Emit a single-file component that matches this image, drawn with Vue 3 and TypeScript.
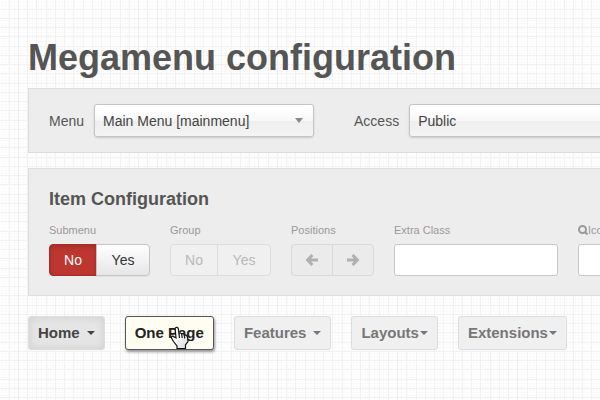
<script setup lang="ts">
import { ref } from 'vue'

interface MenuItem {
  label: string
  dropdown: boolean
  state: 'active' | 'hover' | 'idle'
  spaced: boolean
}

const items: MenuItem[] = [
  { label: 'Home', dropdown: true, state: 'active', spaced: true },
  { label: 'One Page', dropdown: false, state: 'hover', spaced: false },
  { label: 'Features', dropdown: true, state: 'idle', spaced: true },
  { label: 'Layouts', dropdown: true, state: 'idle', spaced: false },
  { label: 'Extensions', dropdown: true, state: 'idle', spaced: false },
]

const menu = ref('mainmenu')
const access = ref('public')
const submenu = ref(false)
const extraClass = ref('')
const icon = ref('')
</script>

<template>
  <main class="page">
    <h1>Megamenu configuration</h1>

    <section class="panel filters">
      <div class="filter">
        <label for="menu">Menu</label>
        <span class="select">
          <select id="menu" v-model="menu">
            <option value="mainmenu">Main Menu [mainmenu]</option>
          </select>
        </span>
      </div>
      <div class="filter">
        <label for="access">Access</label>
        <span class="select">
          <select id="access" v-model="access">
            <option value="public">Public</option>
          </select>
        </span>
      </div>
    </section>

    <section class="panel config">
      <h2>Item Configuration</h2>
      <div class="fields">
        <div class="field" role="group" aria-labelledby="submenu-label">
          <span id="submenu-label" class="caption">Submenu</span>
          <div class="buttons toggle">
            <button type="button" :class="{ danger: !submenu }" @click="submenu = false">No</button>
            <button type="button" :class="{ success: submenu }" @click="submenu = true">Yes</button>
          </div>
        </div>
        <div class="field" role="group" aria-labelledby="group-label">
          <span id="group-label" class="caption">Group</span>
          <div class="buttons toggle">
            <button type="button" disabled>No</button>
            <button type="button" disabled>Yes</button>
          </div>
        </div>
        <div class="field" role="group" aria-labelledby="positions-label">
          <span id="positions-label" class="caption">Positions</span>
          <div class="buttons arrows">
            <button type="button" disabled aria-label="Move left">
              <svg width="12" height="12" viewBox="0 0 12 12"><path d="M6.500 1 1.500 6l5 5M2 6h10" /></svg>
            </button>
            <button type="button" disabled aria-label="Move right">
              <svg width="12" height="12" viewBox="0 0 12 12"><path d="m5.500 1 5 5-5 5M10 6H0" /></svg>
            </button>
          </div>
        </div>
        <div class="field">
          <label for="extra" class="caption">Extra Class</label>
          <input id="extra" v-model="extraClass" type="text" />
        </div>
        <div class="field">
          <label for="icon" class="caption">
            <svg class="search" width="10" height="10" viewBox="0 0 10 10"><circle cx="4.500" cy="4.500" r="3.500" /><path d="m7 7 2.500 2.500" /></svg>Icon</label>
          <input id="icon" v-model="icon" type="text" />
        </div>
      </div>
    </section>

    <nav class="menu">
      <a v-for="item in items" :key="item.label" href="#" :class="['item', item.state]">
        {{ item.label }}<span v-if="item.dropdown" :class="['caret', { spaced: item.spaced }]"></span>
        <svg v-if="item.state === 'hover'" class="pointer" width="20" height="24" viewBox="0 0 20 24">
          <defs>
            <linearGradient id="hand" x1="0" y1="0" x2="1" y2="1">
              <stop offset="0.4" stop-color="#fff" />
              <stop offset="1" stop-color="#d4d4d4" />
            </linearGradient>
          </defs>
          <path fill="url(#hand)" d="M6 12 5.200 3Q5 1.500 6.500 1.300T8.300 2.700L9 7.500Q10.500 6.300 11.700 8 13.300 7 14.300 9 16.500 8.500 17.500 11L18 15.500 15.500 19V22.500H7V20L3.500 15.500 1.500 12Q1 10 3 10.200Z" />
          <path fill="none" d="M9 7.500 9.500 12M11.700 8 12.200 12M14.300 9 14.700 12.500" />
        </svg>
      </a>
    </nav>
  </main>
</template>

<style>
body {
  margin: 0;
}
</style>

<style scoped>
.page {
  --major: #f2f2f2;
  --minor: #fbfbfb;
  box-sizing: border-box;
  min-height: 100vh;
  padding: 38px 0 48px 28px;
  overflow: hidden;
  color: #555;
  font: 14px/20px "Liberation Sans", Arial, sans-serif;
  background:
    repeating-linear-gradient(90deg, transparent 0 9px, var(--major) 9px 10px, transparent 10px 18px, var(--major) 18px 19px, transparent 19px 27px, var(--major) 27px 28px, transparent 28px 36px, var(--major) 36px 37px),
    repeating-linear-gradient(transparent 0 9px, var(--major) 9px 10px, transparent 10px 18px, var(--major) 18px 19px, transparent 19px 27px, var(--major) 27px 28px, transparent 28px 36px, var(--major) 36px 37px),
    repeating-linear-gradient(90deg, transparent 0 2px, var(--minor) 2px 3px),
    repeating-linear-gradient(#fff 0 2px, var(--minor) 2px 3px);
}

h1 {
  margin: 0 0 10px;
  font-size: 36px;
  line-height: 40px;
  white-space: nowrap;
}

h2 {
  margin: 0 0 12px;
  font-size: 18px;
  line-height: 20px;
}

.panel {
  box-sizing: border-box;
  padding: 20px 0 19px 20px;
  overflow: hidden;
  border: 1px solid #ddd;
  border-right: 0;
  background: #ededed;
}

.filters {
  display: flex;
  gap: 40px;
  padding: 15px 0 15px 20px;
}

.filter {
  display: flex;
  flex: none;
  align-items: center;
  gap: 10px;
}

.select {
  position: relative;
  display: block;
}

.select::after {
  position: absolute;
  top: 14px;
  right: 11px;
  border: 4px solid transparent;
  border-top: 5px solid #888;
  border-bottom: 0;
  content: "";
  pointer-events: none;
}

select {
  box-sizing: border-box;
  display: block;
  width: 220px;
  height: 33px;
  padding: 0 8px;
  border: 1px solid #c4c4c4;
  border-radius: 3px;
  color: #444;
  font: inherit;
  background: linear-gradient(#fff 20%, #f6f6f6 50%, #eee 52%, #f4f4f4);
  box-shadow: 0 1px 2px rgba(0, 0, 0, 0.15);
  appearance: none;
}

.config {
  margin-top: 15px;
}

.fields {
  display: flex;
  gap: 20px;
}

.field {
  flex: none;
}

.caption {
  display: block;
  margin-bottom: 5px;
  color: #999;
  font-size: 11px;
  line-height: 18px;
}

.buttons {
  display: flex;
}

button {
  box-sizing: border-box;
  height: 32px;
  padding: 0;
  border: 1px solid #c4c4c4;
  border-radius: 0 4px 4px 0;
  color: #333;
  font: inherit;
  background: linear-gradient(#fff, #e6e6e6);
  box-shadow: 0 1px 1px rgba(0, 0, 0, 0.05);
}

button:first-child {
  border-radius: 4px 0 0 4px;
}

button + button {
  margin-left: -1px;
}

.toggle button {
  width: 48px;
}

.toggle button + button {
  width: 54px;
}

button.danger {
  border-color: #a92b27;
  color: #fff;
  background: #bd362f;
  box-shadow: inset 0 2px 4px rgba(0, 0, 0, 0.15);
}

button.success {
  color: #fff;
  background: #46a546;
}

button:disabled {
  border-color: #ddd;
  color: #b9b9b9;
  background: #f0f0f0;
  box-shadow: none;
}

.arrows button {
  width: 42px;
}

.arrows button:disabled {
  border-color: #d8d8d8;
  background: #ebebeb;
}

.arrows svg {
  display: block;
  margin: 0 auto;
  fill: none;
  stroke: #b0b0b0;
  stroke-width: 3;
}

input {
  box-sizing: border-box;
  display: block;
  width: 164px;
  height: 32px;
  padding: 4px 6px;
  border: 1px solid #c8c8c8;
  border-radius: 3px;
  font: inherit;
  background: #fff;
}

.search {
  fill: none;
  stroke: #999;
  stroke-width: 2;
  vertical-align: -1px;
}

.menu {
  display: flex;
  gap: 20px;
  margin-top: 20px;
}

.item {
  position: relative;
  display: flex;
  align-items: center;
  padding: 6px 9px;
  border: 1px solid #ddd;
  border-radius: 3px;
  color: #777;
  font-size: 15px;
  font-weight: bold;
  text-decoration: none;
  white-space: nowrap;
  background: #f0f0f0;
}

.active {
  color: #444;
  background: #e5e5e5;
  box-shadow: inset 0 0 8px rgba(0, 0, 0, 0.1);
}

.hover {
  border-color: #555;
  color: #222;
  background: #fffdf2;
  box-shadow: 1px 2px 3px rgba(0, 0, 0, 0.4);
}

.caret {
  margin-left: 1px;
  border: 4px solid transparent;
  border-top-color: currentColor;
  border-bottom: 0;
}

.spaced {
  margin-left: 7px;
}

.pointer {
  position: absolute;
  top: 9px;
  left: 44px;
  stroke: #111;
  stroke-width: 1.2;
}
</style>
